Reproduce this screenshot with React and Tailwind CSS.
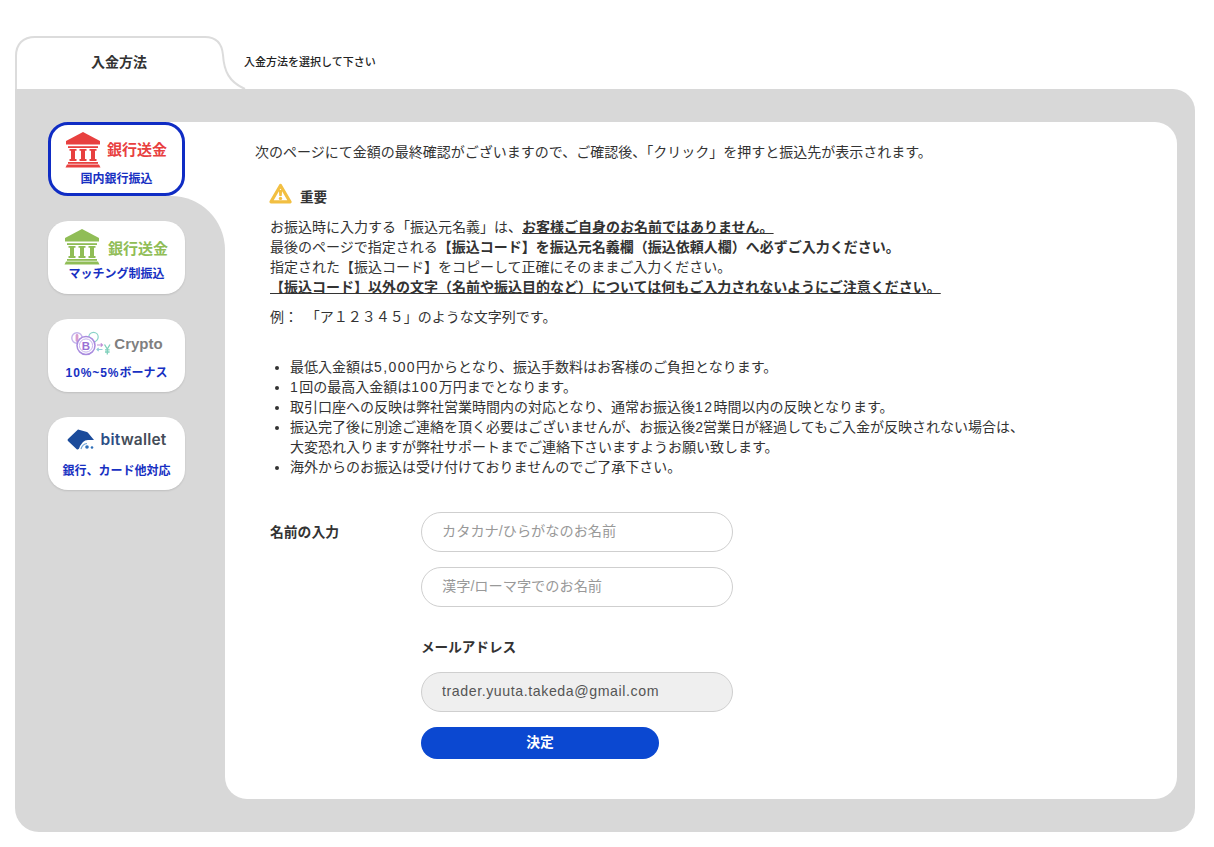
const font = { fontFamily: '"Liberation Sans","Noto Sans CJK JP",sans-serif' };

function Bank({ color }) {
  return (
    <svg width="36" height="36" viewBox="0 0 36 36" fill={color}>
      <path d="M18 0 L35 9 V12.5 H1 V9 Z" />
      <rect x="3" y="14.2" width="30" height="1.8" />
      <path d="M4.5 17 H11.5 V18.8 H10 V27 H11.5 V29 H4.5 V27 H6 V18.8 H4.5 Z" />
      <path d="M14.5 17 H21.5 V18.8 H20 V27 H21.5 V29 H14.5 V27 H16 V18.8 H14.5 Z" />
      <path d="M24.5 17 H31.5 V18.8 H30 V27 H31.5 V29 H24.5 V27 H26 V18.8 H24.5 Z" />
      <rect x="3" y="30" width="30" height="1.8" />
      <path d="M2 32.6 H34 L35.5 35.5 H0.5 Z" />
    </svg>
  );
}

function CryptoIcon() {
  return (
    <svg width="40" height="26" viewBox="0 0 40 26" fill="none">
      <circle cx="6" cy="7" r="5.2" stroke="#c3b2ea" strokeWidth="1.4" />
      <rect x="4.6" y="3" width="2.8" height="8" rx="1.4" fill="#d99ccf" />
      <circle cx="22.5" cy="6" r="4.7" stroke="#8ad3c8" strokeWidth="1.2" />
      <circle cx="15" cy="14.5" r="9" fill="#fff" stroke="#a98bdf" strokeWidth="1.5" />
      <circle cx="15" cy="14.5" r="6.6" stroke="#c6b2ee" strokeWidth="1" />
      <text x="15" y="18.6" textAnchor="middle" fontSize="11.5" fontWeight="700" fill="#9a70d4" fontFamily="Liberation Sans">B</text>
      <path d="M26 14 H31.5 M29.8 12.3 L31.5 14 L29.8 15.7" stroke="#c08fd6" strokeWidth="1.2" />
      <path d="M31.5 18.5 H26 M27.7 16.8 L26 18.5 L27.7 20.2" stroke="#93ccd8" strokeWidth="1.2" />
      <path d="M33.5 13.5 L36.3 18 L39 13.5 M36.3 18 V23.5 M34 18.8 H38.6 M34 21 H38.6" stroke="#7fd0bb" strokeWidth="1.3" />
    </svg>
  );
}

function WalletIcon() {
  return (
    <svg width="28" height="22" viewBox="0 0 28 22">
      <path d="M11 0.5 L20 3 Q21 3.5 22 5 L27 11 H21 Q18 11 16 13 L13 17 Q12 21 10 20.5 L1 12 Q0 11 1 10 Z" fill="#1b4b9b" />
      <path d="M14 20 Q15.5 15 20 14.5" stroke="#6fa5d8" strokeWidth="1.2" fill="none" />
      <circle cx="20" cy="18" r="1.8" fill="#2f6fb8" />
      <circle cx="25" cy="18.5" r="1.3" fill="#2f6fb8" />
    </svg>
  );
}

function Card({ active, className, children }) {
  return (
    <div
      className={
        "relative flex w-[137px] flex-col items-center rounded-[20px] bg-white " +
        (active
          ? "h-[74px] border-[3px] border-[#0f2cc4]"
          : "h-[73px] shadow-[0_1px_2px_rgba(0,0,0,0.12)]") +
        " " + (className || "")
      }
    >
      {children}
    </div>
  );
}

const subText = "text-[12px] leading-[16px] font-bold text-[#1730c2] whitespace-nowrap";

function Sidebar() {
  return (
    <div className="relative flex w-[210px] shrink-0 flex-col gap-[25px] pl-[33px] pt-[33px]">
      <div className="absolute left-[150px] top-[33px] h-[130px] w-[60px] bg-white" />
      <div className="absolute left-[60px] top-[107px] h-[130px] w-[150px] rounded-tr-[54px] bg-[#d8d8d8]" />
      <Card active>
        <div className="mt-[7px] flex items-center gap-[6px] pr-[1px]">
          <Bank color="#e8403f" />
          <span className="text-[15px] leading-[36px] font-bold text-[#e8403f]">銀行送金</span>
        </div>
        <span className={subText + " mt-[3px]"}>国内銀行振込</span>
      </Card>
      <Card>
        <div className="mt-[8px] flex h-[36px] items-center gap-[8px] pr-[1px]">
          <Bank color="#90bd56" />
          <span className="pt-[4px] text-[15px] leading-[32px] font-bold text-[#90bd56]">銀行送金</span>
        </div>
        <span className={subText + " mt-[1px]"}>マッチング制振込</span>
      </Card>
      <Card>
        <div className="mt-[12px] flex h-[26px] items-center gap-[3px] pl-[1px]">
          <CryptoIcon />
          <span className="text-[15px] font-bold text-[#7f7f7f]">Crypto</span>
        </div>
        <span className={subText + " mt-[8px]"}>
          <span className="tracking-[0.9px]">10%~5%</span>ボーナス
        </span>
      </Card>
      <Card>
        <div className="mt-[12px] flex h-[22px] items-center gap-[6px]">
          <WalletIcon />
          <span className="text-[15.5px] font-semibold tracking-[0.2px]" style={{ fontFamily: "Inter, sans-serif" }}>
            <span className="text-[#2c4f86]">bit</span>
            <span className="text-[#444c58]">wallet</span>
          </span>
        </div>
        <span className={subText + " mt-[12px]"}>銀行、カード他対応</span>
      </Card>
    </div>
  );
}

function Warning() {
  return (
    <svg width="23" height="21" viewBox="0 0 23 21">
      <path d="M11.5 2.5 L21 18.8 H2 Z" fill="#fff" stroke="#f2bf42" strokeWidth="3.2" strokeLinejoin="round" />
      <path d="M9.8 7 H13.2 L12.7 13 H10.3 Z" fill="#f2bf42" />
      <circle cx="11.5" cy="15.4" r="1.7" fill="#f2bf42" />
    </svg>
  );
}

const inputClass =
  "block h-[40px] w-[312px] rounded-full border border-[#cfcfcf] px-[20px] pb-[3px] text-[14.2px] text-[#555] outline-none placeholder:text-[#999]";

const num = "tracking-[1.4px]";

function Content() {
  return (
    <div className="relative flex-1 rounded-r-[22px] rounded-bl-[22px] bg-white pl-[30px] pt-[20px] text-[14px] leading-[20px] text-[#333]">
      <p>次のページにて金額の最終確認がございますので、ご確認後、「クリック」を押すと振込先が表示されます。</p>
      <div className="ml-[15px]">
        <div className="mt-[21px] flex h-[24px] items-start gap-[8px] -ml-[1px]">
          <Warning />
          <span className="pt-[5px] text-[13.6px] font-bold">重要</span>
        </div>
        <p className="mt-[10px]">
          お振込時に入力する「振込元名義」は、<b className="underline">お客様ご自身のお名前ではありません。</b>
          <br />
          最後のページで指定される<b>【振込コード】を振込元名義欄（振込依頼人欄）へ必ずご入力ください。</b>
          <br />
          指定された【振込コード】をコピーして正確にそのままご入力ください。
          <br />
          <b className="underline">【振込コード】以外の文字（名前や振込目的など）については何もご入力されないようにご注意ください。</b>
        </p>
        <p className="mt-[10px]">例：&nbsp;&nbsp;「ア１２３４５」のような文字列です。</p>
        <ul className="mt-[30px] list-disc pl-[20px]">
          <li>最低入金額は<span className={num}>5,000</span>円からとなり、振込手数料はお客様のご負担となります。</li>
          <li><span className={num}>1</span>回の最高入金額は<span className={num}>100</span>万円までとなります。</li>
          <li>取引口座への反映は弊社営業時間内の対応となり、通常お振込後<span className={num}>12</span>時間以内の反映となります。</li>
          <li>
            振込完了後に別途ご連絡を頂く必要はございませんが、お振込後2営業日が経過してもご入金が反映されない場合は、
            <br />
            大変恐れ入りますが弊社サポートまでご連絡下さいますようお願い致します。
          </li>
          <li>海外からのお振込は受け付けておりませんのでご了承下さい。</li>
        </ul>
        <div className="mt-[35px] flex">
          <div className="w-[151px] pt-[11px] text-[13.8px] font-bold">名前の入力</div>
          <div className="flex flex-col">
            <input className={inputClass} style={font} placeholder="カタカナ/ひらがなのお名前" />
            <input className={inputClass + " mt-[15px]"} style={font} placeholder="漢字/ローマ字でのお名前" />
            <div className="mt-[31px] text-[13.6px] font-bold">メールアドレス</div>
            <input
              className={inputClass + " mt-[14px] bg-[#efefef] tracking-[0.57px]"}
              style={font}
              readOnly
              value="trader.yuuta.takeda@gmail.com"
            />
            <button className="mt-[15px] h-[32px] w-[238px] rounded-full bg-[#0b48d1] text-[13.8px] font-bold text-white">決定</button>
          </div>
        </div>
      </div>
    </div>
  );
}

export default function App() {
  return (
    <div className="h-[847px] w-[1214px] bg-white pl-[15px] pr-[19px] pt-[36px]" style={font}>
      <div className="flex h-[53px] items-center">
        <div className="relative flex h-[53px] w-[229px] shrink-0 items-center">
          <svg className="absolute left-0 top-0" width="232" height="53" viewBox="0 0 232 53">
            <path
              d="M1 53 V20 C1 8 8 1 20 1 H190 C202 1 207 8 208 19 C209 35 214 46 230 53 Z"
              fill="#fff"
            />
            <path
              d="M1 53 V20 C1 8 8 1 20 1 H190 C202 1 207 8 208 19 C209 35 214 46 230 53"
              fill="none"
              stroke="#dcdcdc"
              strokeWidth="2"
            />
          </svg>
          <span className="relative ml-[76px] pb-[1px] text-[14px] font-bold text-[#333]">入金方法</span>
        </div>
        <span className="text-[11px] font-medium text-[#222]">入金方法を選択して下さい</span>
      </div>
      <div className="flex h-[743px] rounded-tr-[22px] rounded-b-[24px] bg-[#d8d8d8] pb-[33px] pr-[18px]">
        <Sidebar />
        <div className="flex flex-1 pt-[33px]">
          <Content />
        </div>
      </div>
    </div>
  );
}
